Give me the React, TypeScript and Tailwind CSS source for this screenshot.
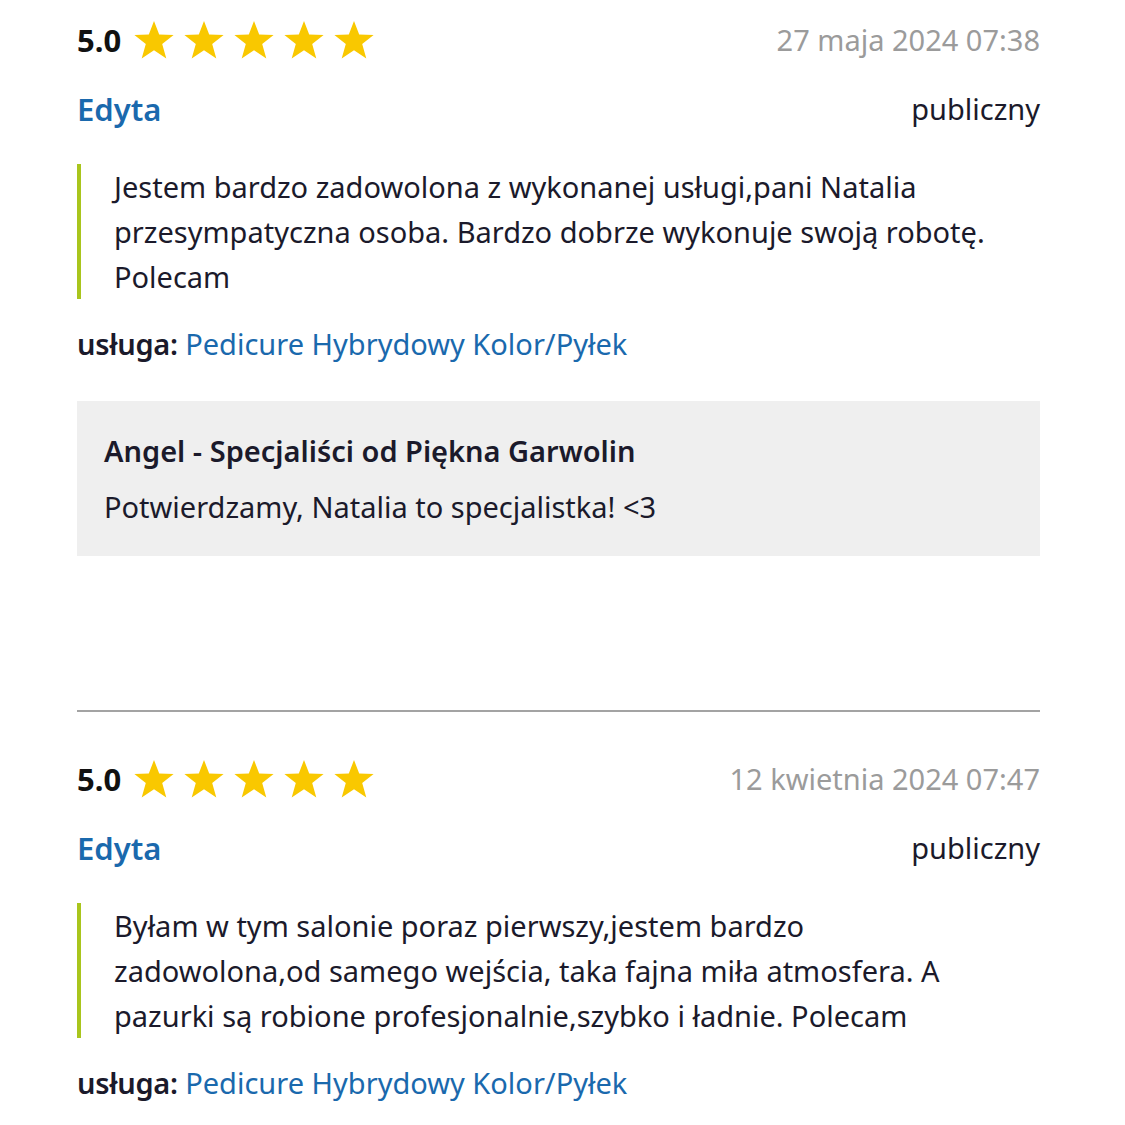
import React from "react";

type Review = {
  rating: string;
  date: string;
  author: string;
  visibility: string;
  text: string;
  service: string;
  reply?: { from: string; text: string };
};

const reviews: Review[] = [
  {
    rating: "5.0",
    date: "27 maja 2024 07:38",
    author: "Edyta",
    visibility: "publiczny",
    text: "Jestem bardzo zadowolona z wykonanej usługi,pani Natalia przesympatyczna osoba. Bardzo dobrze wykonuje swoją robotę. Polecam",
    service: "Pedicure Hybrydowy Kolor/Pyłek",
    reply: {
      from: "Angel - Specjaliści od Piękna Garwolin",
      text: "Potwierdzamy, Natalia to specjalistka! <3",
    },
  },
  {
    rating: "5.0",
    date: "12 kwietnia 2024 07:47",
    author: "Edyta",
    visibility: "publiczny",
    text: "Byłam w tym salonie poraz pierwszy,jestem bardzo zadowolona,od samego wejścia, taka fajna miła atmosfera. A pazurki są robione profesjonalnie,szybko i ładnie. Polecam",
    service: "Pedicure Hybrydowy Kolor/Pyłek",
  },
];

function Star() {
  return (
    <svg width="42" height="40" viewBox="0 0 42 40" className="shrink-0">
      <polygon
        points="21,1 26.2,14.6 40.6,14.9 29.2,23.9 33.3,38.6 21,30.2 8.7,38.6 12.8,23.9 1.4,14.9 15.8,14.6"
        fill="#f9c800"
      />
    </svg>
  );
}

function ReviewCard({ review }: { review: Review }) {
  return (
    <div>
      <div className="flex h-12 items-center justify-between">
        <div className="flex items-center">
          <span className="text-[31px] font-bold text-[#111]">{review.rating}</span>
          <div className="ml-[12px] flex gap-[8px]">
            {[0, 1, 2, 3, 4].map((i) => (
              <Star key={i} />
            ))}
          </div>
        </div>
        <span className="text-[29px] text-[#9b9b9b]">{review.date}</span>
      </div>

      <div className="mt-[23px] flex h-11 items-center justify-between">
        <span className="text-[31px] font-semibold text-[#1a69ad]">{review.author}</span>
        <span className="text-[29px] text-[#1b1a2b]">{review.visibility}</span>
      </div>

      <div className="mt-[33px] border-l-[4px] border-[#a9c51d] pl-[33px] pr-[40px]">
        <p className="text-[29px] leading-[45px] text-[#1b1a2b]">{review.text}</p>
      </div>

      <div className="mt-[25px] h-10 text-[29px] leading-[40px]">
        <span className="font-semibold tracking-[-0.3px] text-[#1b1a2b]">usługa:</span>{" "}
        <span className="text-[#1a69ad]">{review.service}</span>
      </div>

      {review.reply && (
        <div className="mt-[37px] bg-[#efefef] px-[27px] pb-[29px] pt-[30px]">
          <div className="text-[29px] font-semibold leading-[40px] text-[#1b1a2b]">
            {review.reply.from}
          </div>
          <div className="mt-[16px] text-[29px] leading-[40px] text-[#1b1a2b]">
            {review.reply.text}
          </div>
        </div>
      )}
    </div>
  );
}

export default function App() {
  return (
    <div
      className="min-h-[1125px] bg-white"
      style={{ fontFamily: '"Noto Sans", sans-serif' }}
    >
      <div className="ml-[77px] w-[963px] pt-[16px]">
        <ReviewCard review={reviews[0]} />
        <div className="mt-[154px] h-[2px] bg-[#a3a3a3]" />
        <div className="pt-[43px]">
          <ReviewCard review={reviews[1]} />
        </div>
      </div>
    </div>
  );
}
